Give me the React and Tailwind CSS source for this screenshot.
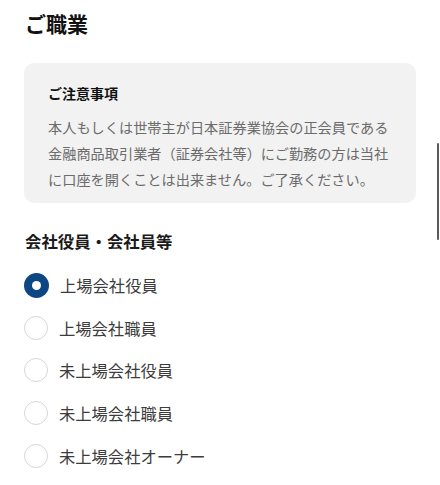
import React from "react";

const options = [
  "上場会社役員",
  "上場会社職員",
  "未上場会社役員",
  "未上場会社職員",
  "未上場会社オーナー",
];

export default function App() {
  const font = { fontFamily: '"Noto Sans CJK JP", "Noto Sans", sans-serif' };
  return (
    <div
      className="relative w-[440px] h-[485px] overflow-hidden bg-white px-6"
      style={font}
    >
      <h1 className="pt-[10px] pl-[1px] text-[21px] leading-[26px] font-bold text-[#111]">
        ご職業
      </h1>

      <div className="mt-[27px] rounded-[10px] bg-[#f2f2f2] pl-6 pr-5 pt-5 pb-[11px]">
        <p className="text-[14px] leading-[20px] font-bold text-[#111]">
          ご注意事項
        </p>
        <p className="mt-[11px] text-[14.2px] leading-[26px] text-[#6b6b6b]">
          本人もしくは世帯主が日本証券業協会の正会員である金融商品取引業者（証券会社等）にご勤務の方は当社に口座を開くことは出来ません。ご了承ください。
        </p>
      </div>

      <p className="mt-[26px] pl-[1px] text-[16.4px] leading-[24px] font-bold text-[#1a1a1a]">
        会社役員・会社員等
      </p>

      <div className="mt-[11px] flex flex-col">
        {options.map((label, i) => (
          <label key={label} className="flex h-[42.6px] items-center gap-[11px]">
            {i === 0 ? (
              <span className="flex h-[25px] w-[25px] shrink-0 items-center justify-center rounded-full bg-[#0c4784]">
                <span className="h-[9px] w-[9px] rounded-full bg-white" />
              </span>
            ) : (
              <span className="h-[24px] w-[24px] shrink-0 rounded-full border-[1.5px] border-[#d6d6d6] bg-white" />
            )}
            <span className="text-[16.3px] leading-[24px] text-[#3c3c3c]">
              {label}
            </span>
          </label>
        ))}
      </div>

      <div className="absolute right-[1px] top-[143px] h-[97px] w-[2.5px] rounded-full bg-[#5a5a5a]" />
    </div>
  );
}
